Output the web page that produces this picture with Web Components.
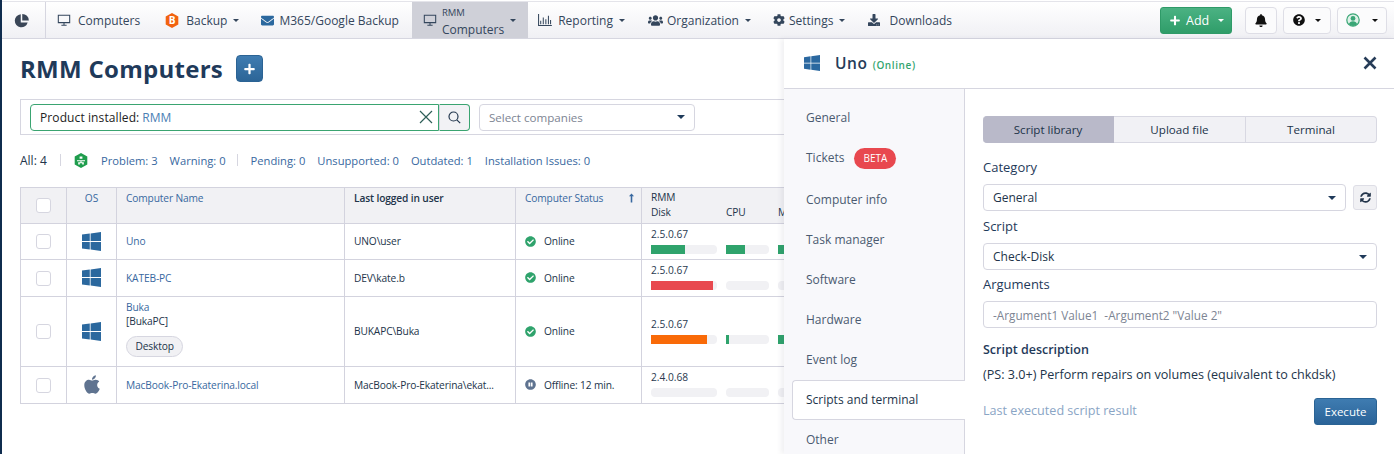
<!DOCTYPE html>
<html lang="en">
<head>
<meta charset="utf-8">
<title>RMM Computers</title>
<style>
  html, body { margin: 0; padding: 0; height: 100%; overflow: hidden; background: #fff; }
  body { font-family: "Open Sans", sans-serif; color: #1e3248; }
</style>
</head>
<body>
<rmm-app>
  <top-nav slot="nav"></top-nav>
  <rmm-page slot="page"></rmm-page>
  <device-drawer slot="drawer"></device-drawer>
</rmm-app>

<script>
const ICONS = {
  windows: ["0 32 448 448", "M0 93.7l183.6-25.3v177.4H0V93.7zm0 324.6l183.6 25.3V268.4H0v149.9zm202.8 28L448 480V268.4H202.8v177.9zm0-380.6v180.1H448V32L202.8 65.7z"],
  apple: ["0 0 384 512", "M318.7 268.7c-.2-36.7 16.4-64.4 50-84.8-18.8-26.9-47.2-41.7-84.7-44.6-35.5-2.8-74.3 20.7-88.5 20.7-15 0-49.4-19.7-76.4-19.7C63.3 141.2 4 184.8 4 273.5q0 39.3 14.4 81.2c12.8 36.7 59 126.7 107.2 125.2 25.2-.6 43-17.9 75.8-17.9 31.8 0 48.3 17.9 76.4 17.9 48.6-.7 90.4-82.5 102.6-119.3-65.2-30.7-61.7-90-61.7-91.9zm-56.6-164.2c27.3-32.4 24.8-61.9 24-72.5-24.1 1.4-52 16.4-67.9 34.9-17.5 19.8-27.8 44.3-25.6 71.9 26.1 2 49.9-11.4 69.5-34.3z"],
  bell: ["0 0 448 512", "M224 512c35.32 0 63.97-28.65 63.97-64H160.03c0 35.35 28.65 64 63.97 64zm215.39-149.71c-19.32-20.76-55.47-51.99-55.47-154.29 0-77.7-54.48-139.9-127.94-155.16V32c0-17.67-14.32-32-31.98-32s-31.98 14.33-31.98 32v20.84C118.56 68.1 64.08 130.3 64.08 208c0 102.3-36.15 133.53-55.47 154.29-6 6.45-8.66 14.16-8.61 21.71.11 16.4 12.98 32 32.1 32h383.8c19.12 0 32-15.6 32.1-32 .05-7.55-2.61-15.27-8.61-21.71z"],
  question: ["0 0 512 512", "M504 256c0 136.997-111.043 248-248 248S8 392.997 8 256C8 119.083 119.043 8 256 8s248 111.083 248 248zM262.655 90c-54.497 0-89.255 22.957-116.549 63.758-3.536 5.286-2.353 12.415 2.715 16.258l34.699 26.31c5.205 3.947 12.621 3.008 16.665-2.122 17.864-22.658 30.113-35.797 57.303-35.797 20.429 0 45.698 13.148 45.698 32.958 0 14.976-12.363 22.667-32.534 33.976C247.128 238.528 216 254.941 216 296v4c0 6.627 5.373 12 12 12h56c6.627 0 12-5.373 12-12v-1.333c0-28.462 83.186-29.647 83.186-106.667 0-58.002-60.165-102-116.531-102zM256 338c-25.365 0-46 20.635-46 46 0 25.364 20.635 46 46 46s46-20.636 46-46c0-25.365-20.635-46-46-46z"],
  check: ["0 0 512 512", "M504 256c0 136.967-111.033 248-248 248S8 392.967 8 256 119.033 8 256 8s248 111.033 248 248zM227.314 387.314l184-184c6.248-6.248 6.248-16.379 0-22.627l-22.627-22.627c-6.248-6.249-16.379-6.249-22.628 0L216 308.118l-70.059-70.059c-6.248-6.248-16.379-6.248-22.628 0l-22.627 22.627c-6.248 6.248-6.248 16.379 0 22.627l104 104c6.249 6.249 16.379 6.249 22.628.001z"],
  pause: ["0 0 512 512", "M256 8C119 8 8 119 8 256s111 248 248 248 248-111 248-248S393 8 256 8zm-16 328c0 8.8-7.2 16-16 16h-48c-8.8 0-16-7.2-16-16V176c0-8.8 7.2-16 16-16h48c8.8 0 16 7.2 16 16v160zm112 0c0 8.8-7.2 16-16 16h-48c-8.8 0-16-7.2-16-16V176c0-8.8 7.2-16 16-16h48c8.8 0 16 7.2 16 16v160z"],
  search: ["0 0 13 13", "M5.5 1a4.5 4.5 0 1 0 0 9a4.5 4.5 0 1 0 0-9zM8.8 8.8l3.4 3.4", true],
  cog: ["0 0 512 512", "M487.4 315.7l-42.6-24.6c4.3-23.2 4.3-47 0-70.2l42.6-24.6c4.9-2.8 7.1-8.6 5.5-14-11.1-35.6-30-67.8-54.7-94.6-3.8-4.1-10-5.1-14.8-2.3L380.8 110c-17.9-15.4-38.5-27.3-60.8-35.1V25.8c0-5.6-3.9-10.5-9.4-11.7-36.7-8.2-74.3-7.8-109.2 0-5.5 1.2-9.4 6.1-9.4 11.7V75c-22.2 7.9-42.8 19.8-60.8 35.1L88.7 85.5c-4.9-2.8-11-1.9-14.8 2.3-24.7 26.7-43.6 58.9-54.7 94.6-1.7 5.4.6 11.2 5.5 14L67.3 221c-4.3 23.2-4.3 47 0 70.2l-42.6 24.6c-4.9 2.8-7.1 8.6-5.5 14 11.1 35.6 30 67.8 54.7 94.6 3.8 4.1 10 5.1 14.8 2.3l42.6-24.6c17.9 15.4 38.5 27.3 60.8 35.1v49.2c0 5.6 3.9 10.5 9.4 11.7 36.7 8.2 74.3 7.8 109.2 0 5.5-1.2 9.4-6.1 9.4-11.7v-49.2c22.2-7.9 42.8-19.8 60.8-35.1l42.6 24.6c4.9 2.8 11 1.9 14.8-2.3 24.7-26.7 43.6-58.9 54.7-94.6 1.5-5.5-.7-11.3-5.6-14.1zM256 336c-44.1 0-80-35.9-80-80s35.9-80 80-80 80 35.9 80 80-35.9 80-80 80z"],
  users: ["0 0 640 512", "M96 224c35.3 0 64-28.7 64-64s-28.7-64-64-64-64 28.7-64 64 28.7 64 64 64zm448 0c35.3 0 64-28.7 64-64s-28.7-64-64-64-64 28.7-64 64 28.7 64 64 64zm32 32h-64c-17.6 0-33.5 7.1-45.1 18.6 40.3 22.1 68.9 62 75.1 109.4h66c17.7 0 32-14.3 32-32v-32c0-35.3-28.7-64-64-64zm-256 0c61.9 0 112-50.1 112-112S381.9 32 320 32 208 82.1 208 144s50.1 112 112 112zm76.8 32h-8.3c-20.8 10-43.9 16-68.5 16s-47.6-6-68.5-16h-8.3C179.6 288 128 339.6 128 403.2V432c0 26.5 21.5 48 48 48h288c26.5 0 48-21.5 48-48v-28.8c0-63.6-51.6-115.2-115.2-115.2zm-223.7-13.4C161.5 263.1 145.6 256 128 256H64c-35.3 0-64 28.7-64 64v32c0 17.7 14.3 32 32 32h65.9c6.3-47.4 34.9-87.3 75.2-109.4z"],
  download: ["0 0 512 512", "M216 0h80c13.3 0 24 10.7 24 24v168h87.7c17.8 0 26.7 21.5 14.1 34.1L269.7 378.3c-7.5 7.5-19.8 7.5-27.3 0L90.1 226.1c-12.6-12.6-3.7-34.1 14.1-34.1H192V24c0-13.3 10.7-24 24-24zm296 376v112c0 13.3-10.7 24-24 24H24c-13.3 0-24-10.7-24-24V376c0-13.3 10.7-24 24-24h146.7l49 49c20.1 20.1 52.5 20.1 72.6 0l49-49H488c13.3 0 24 10.7 24 24zm-124 88c0-11-9-20-20-20s-20 9-20 20 9 20 20 20 20-9 20-20zm64 0c0-11-9-20-20-20s-20 9-20 20 9 20 20 20 20-9 20-20z"],
  envelope: ["0 0 512 512", "M502.3 190.8c3.9-3.1 9.7-.2 9.7 4.7V400c0 26.5-21.5 48-48 48H48c-26.5 0-48-21.5-48-48V195.6c0-5 5.7-7.8 9.7-4.7 22.4 17.4 52.1 39.5 154.1 113.6 21.1 15.4 56.7 47.8 92.2 47.6 35.7.3 72-32.8 92.3-47.6 102-74.1 131.6-96.3 154-113.7zM256 320c23.2.4 56.6-29.2 73.4-41.4 132.7-96.3 142.8-104.7 173.4-128.7 5.8-4.5 9.2-11.5 9.2-18.9v-19c0-26.5-21.5-48-48-48H48C21.5 64 0 85.5 0 112v19c0 7.4 3.4 14.3 9.2 18.9 30.6 23.9 40.7 32.4 173.4 128.7 16.8 12.2 50.2 41.8 73.4 41.4z"],
  sync: ["0 0 512 512", "M370.72 133.28C339.458 104.008 298.888 87.962 255.848 88c-77.458.068-144.328 53.178-162.791 126.85-1.344 5.363-6.122 9.15-11.651 9.15H24.103c-7.498 0-13.194-6.807-11.807-14.176C33.933 94.924 134.813 8 256 8c66.448 0 126.791 26.136 171.315 68.685L463.03 40.97C478.149 25.851 504 36.559 504 57.941V192c0 13.255-10.745 24-24 24H345.941c-21.382 0-32.09-25.851-16.971-40.971l41.75-41.749zM32 296h134.059c21.382 0 32.09 25.851 16.971 40.971l-41.75 41.75c31.262 29.273 71.835 45.319 114.876 45.28 77.418-.07 144.315-53.144 162.787-126.849 1.344-5.363 6.122-9.15 11.651-9.15h57.304c7.498 0 13.194 6.807 11.807 14.176C478.067 417.076 377.187 504 256 504c-66.448 0-126.791-26.136-171.315-68.685L48.97 471.03C33.851 486.149 8 475.441 8 454.059V320c0-13.255 10.745-24 24-24z"],
  plus: ["0 0 448 512", "M416 208H272V64c0-17.67-14.33-32-32-32h-32c-17.67 0-32 14.33-32 32v144H32c-17.67 0-32 14.33-32 32v32c0 17.67 14.33 32 32 32h144v144c0 17.67 14.33 32 32 32h32c17.67 0 32-14.33 32-32V304h144c17.67 0 32-14.33 32-32v-32c0-17.67-14.33-32-32-32z"],
  arrowup: ["0 0 320 512", "M160 20L290 170H200V492H120V170H30Z"],
  monitor: ["0 0 16 16", "M1.5 2.5h13v8.5h-13zM5 14h6M8 11v3", true],
  chart: ["0 0 16 14", "M.5 0v13.5H16M3 8v4M6 4v8M9 6v6M12 2v10M14.5 7v5", true]
};

class ShadowElement extends HTMLElement {
  static get styles() { return ""; }
  markup() { return "<slot></slot>"; }
  connectedCallback() {
    if (this.shadowRoot) return;
    this.attachShadow({ mode: "open" });
    this.shadowRoot.innerHTML = `<style>${this.constructor.styles}</style>${this.markup()}`;
  }
}

class AppIcon extends ShadowElement {
  static get styles() {
    return `:host { display: inline-flex; line-height: 0; flex: none; } svg { display: block; }`;
  }
  markup() {
    const [box, d, outline] = ICONS[this.getAttribute("name")];
    const w = this.getAttribute("w") || 14;
    const h = this.getAttribute("h") || 14;
    const paint = outline
      ? `fill="none" stroke="currentColor" stroke-width="1.2"`
      : `fill="currentColor"`;
    return `<svg width="${w}" height="${h}" viewBox="${box}"><path ${paint} d="${d}"/></svg>`;
  }
}

class NavCaret extends ShadowElement {
  static get styles() {
    return `:host { display: inline-block; width: 0; height: 0; flex: none;
      border-left: 3px solid transparent; border-right: 3px solid transparent; border-top: 3px solid currentColor; }`;
  }
  markup() { return ""; }
}

class RmmApp extends ShadowElement {
  static get styles() {
    return `
      :host { display: flex; flex-direction: column; height: 454px; box-sizing: border-box;
        border-left: 2px solid #0f2c4e; position: relative; overflow: hidden; }
      .body { position: relative; flex: 1; min-height: 0; }
    `;
  }
  markup() {
    return `<slot name="nav"></slot><div class="body"><slot name="page"></slot><slot name="drawer"></slot></div>`;
  }
}

class NavItem extends ShadowElement {
  static get styles() {
    return `
      :host { display: flex; align-items: center; height: 100%; padding: 0 11px; color: #34465c;
        font-size: 12px; white-space: nowrap; box-sizing: border-box; }
      :host([active]) { background: #cfd0d8; padding-right: 12px; }
      .label { margin-left: var(--gap, 7px); }
      :host([active]) .label { margin-top: 5px; }
      .cap { font-size: 9.5px; display: block; line-height: 12px; }
      .main { display: block; line-height: 17px; margin-top: 2px; }
      nav-caret { margin-left: 6px; }
    `;
  }
  markup() {
    const caret = this.hasAttribute("caret") ? "<nav-caret></nav-caret>" : "";
    const cap = this.getAttribute("cap");
    const text = cap
      ? `<span class="cap">${cap}</span><span class="main"><slot></slot></span>`
      : `<slot></slot>`;
    return `<slot name="icon"></slot><span class="label">${text}</span>${caret}`;
  }
}

class TopNav extends ShadowElement {
  static get styles() {
    return `
      :host { display: flex; align-items: stretch; height: 36px; box-sizing: content-box; flex: none;
        margin-top: 1px; border-top: 1px solid #e4e4ea; border-bottom: 1px solid #d6d6e0;
        background: linear-gradient(#fff, #f0f0f4); font-size: 12px; position: relative; }
      .logo { width: 44px; box-sizing: border-box; border-right: 1px solid #d6d6e0; display: flex;
        align-items: center; justify-content: center; padding-right: 4px; }
      .items { display: flex; align-items: stretch; }
      .right { margin-left: auto; display: flex; align-items: center; padding-right: 7px; }
      .add { width: 72px; height: 27px; box-sizing: border-box; border: 1px solid #2f9a68; border-radius: 3px;
        background: linear-gradient(#4bb283, #2f9d69); color: #fff; display: flex; align-items: center;
        font-size: 12.5px; padding-left: 9px; margin-right: 13px; }
      .add span { margin: 0 9px 0 6px; }
      .tool { height: 27px; box-sizing: border-box; border: 1px solid #dedee6; border-radius: 4px; background: #fbfbfc;
        display: flex; align-items: center; justify-content: center; color: #111; margin-right: 6px; }
      .bell { width: 32px; }
      .help { width: 48px; gap: 10px; }
      .user { width: 50px; gap: 12px; margin-right: 0; }
    `;
  }
  markup() {
    return `
      <div class="logo">
        <svg width="15" height="15" viewBox="0 0 16 16">
          <path fill="#3a4657" d="M7.2 1.2A7 7 0 1 0 14.6 10H7.2z"/>
          <path fill="#3a4657" d="M9 0a7 7 0 0 1 7 7H9z" transform="translate(-.2 1)"/>
        </svg>
      </div>
      <div class="items">
        <nav-item style="margin-right:3px"><app-icon slot="icon" name="monitor" w="14" h="14"></app-icon>Computers</nav-item>
        <nav-item caret>
          <svg slot="icon" width="14" height="15" viewBox="0 0 14 15">
            <path fill="#f2620f" d="M7 0l6.3 3.6v7.8L7 15 .7 11.4V3.6z"/>
            <text x="7" y="11" text-anchor="middle" fill="#fff" font-family="Open Sans" font-weight="700" font-size="10">B</text>
          </svg>
          Backup
        </nav-item>
        <nav-item style="margin-right:2px;--gap:5px"><app-icon slot="icon" name="envelope" w="13" h="13" style="color:#2b689e"></app-icon>M365/Google Backup</nav-item>
        <nav-item active caret cap="RMM" style="--gap:5px"><app-icon slot="icon" name="monitor" w="14" h="14"></app-icon>Computers</nav-item>
        <nav-item caret style="margin-left:-1px;--gap:6px"><app-icon slot="icon" name="chart" w="14" h="12"></app-icon>Reporting</nav-item>
        <nav-item caret style="margin-left:1px;--gap:4px"><app-icon slot="icon" name="users" w="15" h="13"></app-icon>Organization</nav-item>
        <nav-item caret style="--gap:4px"><app-icon slot="icon" name="cog" w="12" h="12"></app-icon>Settings</nav-item>
        <nav-item style="margin-left:1px;--gap:9px"><app-icon slot="icon" name="download" w="12" h="12"></app-icon>Downloads</nav-item>
      </div>
      <div class="right">
        <div class="add"><app-icon name="plus" w="10" h="11"></app-icon><span>Add</span><nav-caret></nav-caret></div>
        <div class="tool bell"><app-icon name="bell" w="12" h="13"></app-icon></div>
        <div class="tool help"><app-icon name="question" w="12" h="12"></app-icon><nav-caret></nav-caret></div>
        <div class="tool user">
          <svg width="14" height="14" viewBox="0 0 14 14">
            <circle cx="7" cy="7" r="6.2" fill="#dff1e8" stroke="#3aa676" stroke-width="1.2"/>
            <circle cx="7" cy="5.4" r="2.4" fill="#3aa676"/>
            <path fill="#3aa676" d="M2.8 11.2c.6-2 2.2-3 4.2-3s3.6 1 4.2 3A6 6 0 0 1 7 13a6 6 0 0 1-4.2-1.8z"/>
          </svg>
          <nav-caret></nav-caret>
        </div>
      </div>
    `;
  }
}

class RmmPage extends ShadowElement {
  static get styles() {
    return `
      :host { display: block; padding: 16px 0 0 18px; }
      .title { display: flex; align-items: center; height: 27px; gap: 13px; }
      h1 { margin: 0; font-size: 24px; font-weight: 700; color: #1f3a5a; letter-spacing: .28px; line-height: 27px; }
      .add { width: 27px; height: 27px; border-radius: 4px; background: linear-gradient(#3f7cb1, #2c6597);
        display: flex; align-items: center; justify-content: center; color: #fff; box-sizing: border-box; border: 1px solid #2b6394; }
    `;
  }
  markup() {
    return `
      <div class="title">
        <h1>RMM Computers</h1>
        <div class="add"><app-icon name="plus" w="11" h="12"></app-icon></div>
      </div>
      <filter-bar></filter-bar>
      <stat-row></stat-row>
      <computer-table></computer-table>
    `;
  }
}

class FilterBar extends ShadowElement {
  static get styles() {
    return `
      :host { display: flex; align-items: center; margin-top: 17px; height: 36px; box-sizing: border-box;
        border: 1px solid #d6d6e0; border-right: 0; padding-left: 9px; font-size: 12px; color: #222; }
      .input { width: 409px; height: 27px; box-sizing: border-box; border: 1px solid #3aa471; border-radius: 4px 0 0 4px;
        display: flex; align-items: center; padding-left: 9px; background: #fff; }
      .input b { font-weight: 500; letter-spacing: .1px; }
      .input span { color: #4a80b4; margin-left: 3px; }
      .input svg { margin-left: auto; margin-right: 5px; }
      .search { width: 31px; height: 27px; box-sizing: border-box; border: 1px solid #3aa471; border-left-color: #d6d6e0; border-radius: 0 4px 4px 0;
        background: #f2f2f5; display: flex; align-items: center; justify-content: center; color: #24384f; }
      .select { width: 216px; height: 27px; margin-left: 9px; box-sizing: border-box; border: 1px solid #d6d6e0; border-radius: 4px;
        display: flex; align-items: center; padding: 0 9px; color: #7d8593; justify-content: space-between; font-size: 11.6px; }
      nav-caret { color: #1f3a5a; }
    `;
  }
  markup() {
    return `
      <div class="input"><b>Product installed:</b><span>RMM</span>
        <svg width="14" height="14" viewBox="0 0 14 14"><path d="M1 1l12 12M13 1L1 13" stroke="#2e5f58" stroke-width="1.2" fill="none"/></svg>
      </div>
      <div class="search"><app-icon name="search" w="13" h="13"></app-icon></div>
      <div class="select">Select companies<nav-caret style="border-left-width:4px;border-right-width:4px;border-top-width:4px"></nav-caret></div>
    `;
  }
}

class StatRow extends ShadowElement {
  static get styles() {
    return `
      :host { display: flex; align-items: center; height: 18px; margin-top: 16px; font-size: 11.2px; color: #3868a0; white-space: nowrap; }
      .all { color: #22344a; width: 27px; font-size: 12px; }
      .sep { width: 1px; height: 12px; background: #d6d6e0; }
      svg { display: block; }
      a { margin-right: 12px; }
    `;
  }
  markup() {
    return `
      <span class="all">All: 4</span>
      <span class="sep" style="margin:0 13px"></span>
      <svg width="14" height="15" viewBox="0 0 14 15" style="margin-right:13px">
        <path fill="#1f9d4d" d="M7 0l6.3 3.6v7.8L7 15 .7 11.4V3.6z"/>
        <path fill="#fff" d="M5.6 3.4h2.8v2.4H5.6zM3 7.2h8v1H7.5v1.1H9.8V11.6H8.2V10.2H5.8V11.6H4.2V9.3H6.5V8.2H3z"/>
      </svg>
      <a>Problem: 3</a><a>Warning: 0</a>
      <span class="sep" style="margin:0 13px 0 -1px"></span>
      <a>Pending: 0</a><a>Unsupported: 0</a><a>Outdated: 1</a><a>Installation Issues: 0</a>
    `;
  }
}

class ComputerTable extends ShadowElement {
  static get styles() {
    return `
      :host { display: block; margin-top: 18px; font-size: 10.2px; letter-spacing: -.13px; color: #22344a;
        --cols: 45px 50px 228px 171px 126px 1fr; }
      .head { display: grid; grid-template-columns: var(--cols); height: 37px; box-sizing: border-box;
        background: #f1f1f4; border: 1px solid #d3d3de; border-right: 0; }
      .head > div { border-left: 1px solid #d3d3de; padding: 3px 9px; box-sizing: border-box; white-space: nowrap; position: relative; line-height: 14px; }
      .head > div:first-child { border-left: 0; padding: 0; }
      .link { color: #3868a0; }
      .center { text-align: center; padding: 3px 0 !important; }
      .rmm { padding: 2px 9px !important; line-height: 15px !important; }
      .rmm div { display: flex; }
      .rmm div span:nth-child(1) { width: 75px; }
      .rmm div span:nth-child(2) { width: 52px; }
      .sort { position: absolute; right: 6px; top: 5px; color: #3868a0; }
      row-check { margin: 10px 0 0 15px; }
    `;
  }
  markup() {
    return `
      <div class="head">
        <div><row-check></row-check></div>
        <div class="link center">OS</div>
        <div class="link">Computer Name</div>
        <div style="font-weight:600">Last logged in user</div>
        <div class="link">Computer Status<app-icon class="sort" name="arrowup" w="7" h="10"></app-icon></div>
        <div class="rmm">RMM<div><span>Disk</span><span>CPU</span><span>Memory</span></div></div>
      </div>
      <computer-row os="windows" height="36" user="UNO\\user" status="online" label="Online" version="2.5.0.67" bars="52:#2fa36c,44:#2fa36c,30:#2fa36c"><span class="name">Uno</span></computer-row>
      <computer-row os="windows" height="37" user="DEV\\kate.b" status="online" label="Online" version="2.5.0.67" bars="94:#e8494f,0:#fff,0:#fff"><span class="name">KATEB-PC</span></computer-row>
      <computer-row os="windows" height="70" lift user="BUKAPC\\Buka" status="online" label="Online" version="2.5.0.67" bars="85:#f96a08,7:#2fa36c,14:#2fa36c">
        <span class="name">Buka</span><span class="alias">[BukaPC]</span><tag-pill>Desktop</tag-pill>
      </computer-row>
      <computer-row os="apple" height="37" user="MacBook-Pro-Ekaterina\\ekat..." status="offline" label="Offline: 12 min." version="2.4.0.68" bars="0:#fff,0:#fff,0:#fff"><span class="name">MacBook-Pro-Ekaterina.local</span></computer-row>
    `;
  }
}

class RowCheck extends ShadowElement {
  static get styles() {
    return `:host { display: block; width: 15px; height: 15px; box-sizing: border-box; background: #fff;
      border: 1px solid #d6d6e0; border-radius: 3px; }`;
  }
  markup() { return ""; }
}

class TagPill extends ShadowElement {
  static get styles() {
    return `:host { display: inline-block; margin-top: 8px; padding: 0 8.5px; height: 21px; line-height: 19px; box-sizing: border-box;
      border: 1px solid #d6d6e0; border-radius: 11px; background: #f1f1f4; color: #22344a; font-size: 10.2px; }`;
  }
}

class ComputerRow extends ShadowElement {
  static get styles() {
    return `
      :host { display: grid; grid-template-columns: var(--cols); box-sizing: border-box;
        border: 1px solid #d3d3de; border-top: 0; border-right: 0; font-size: 10.2px; white-space: nowrap; }
      .cell { border-left: 1px solid #d3d3de; display: flex; align-items: center; padding: 0 9px 1px; box-sizing: border-box; min-width: 0; }
      .cell.chk { border-left: 0; padding: 0 0 0 15px; }
      .os { justify-content: center; padding: 0 0 1px; color: #2b689e; }
      .os.apple { color: #5f7390; }
      .name { flex-direction: column; align-items: flex-start; justify-content: center; line-height: 14px; }
      :host([lift]) .name { padding-bottom: 7px; }
      ::slotted(.name) { color: #3868a0; display: block; }
      ::slotted(.alias) { color: #22344a; display: block; }
      .status { gap: 8px; }
      .status app-icon { color: #2fa36c; }
      .status.offline app-icon { color: #5f7390; }
      .rmm { flex-direction: column; align-items: flex-start; justify-content: center; padding-bottom: 0; }
      .ver { line-height: 9px; margin-bottom: 6px; color: #2a3a50; letter-spacing: 0; }
      .bars { display: flex; gap: 9px; }
    `;
  }
  markup() {
    const os = this.getAttribute("os");
    const offline = this.getAttribute("status") === "offline";
    const bars = this.getAttribute("bars").split(",").map((pair, i) => {
      const [fill, color] = pair.split(":");
      return `<usage-bar fill="${fill}" color="${color}" style="width:${i === 0 ? 66 : 43}px"></usage-bar>`;
    }).join("");
    this.style.height = this.getAttribute("height") + "px";
    return `
      <div class="cell chk"><row-check></row-check></div>
      <div class="cell os ${os}"><app-icon name="${os}" w="${os === "apple" ? 16 : 19}" h="${os === "apple" ? 21 : 19}"></app-icon></div>
      <div class="cell name"><slot></slot></div>
      <div class="cell">${this.getAttribute("user")}</div>
      <div class="cell status ${offline ? "offline" : ""}">
        <app-icon name="${offline ? "pause" : "check"}" w="11" h="11"></app-icon>${this.getAttribute("label")}
      </div>
      <div class="cell rmm"><div class="ver">${this.getAttribute("version")}</div><div class="bars">${bars}</div></div>
    `;
  }
}

class UsageBar extends ShadowElement {
  static get styles() {
    return `
      :host { display: block; height: 9px; background: #f1f1f4; border-radius: 4px; flex: none; }
      div { height: 100%; }
    `;
  }
  markup() {
    return `<div style="width:${this.getAttribute("fill")}%;background:${this.getAttribute("color")}"></div>`;
  }
}

class DeviceDrawer extends ShadowElement {
  static get styles() {
    return `
      :host { position: absolute; top: 0; right: 0; bottom: 0; width: 610px; background: #fff;
        box-shadow: -3px 0 5px rgba(60, 60, 90, .08); display: flex; flex-direction: column; }
      header { height: 50px; flex: none; box-sizing: border-box; border-bottom: 1px solid #d6d6e0; display: flex; align-items: center;
        padding: 0 17px 1px 20px; color: #2b68a0; }
      h2 { margin: 0 0 0 15px; font-size: 15.5px; font-weight: 600; color: #263c58; letter-spacing: .6px; }
      .state { font-size: 10px; font-weight: 600; color: #33a56f; margin: 3px 0 0 5px; letter-spacing: .6px; }
      .close { margin-left: auto; }
      .body { display: flex; flex: 1; min-height: 0; }
    `;
  }
  markup() {
    return `
      <header>
        <app-icon name="windows" w="16" h="16"></app-icon>
        <h2>Uno</h2><span class="state">(Online)</span>
        <svg class="close" width="14" height="14" viewBox="0 0 14 14"><path d="M1.5 1.5l11 11M12.5 1.5l-11 11" stroke="#263c58" stroke-width="2.6" fill="none"/></svg>
      </header>
      <div class="body">
        <side-menu></side-menu>
        <script-panel></script-panel>
      </div>
    `;
  }
}

class SideMenu extends ShadowElement {
  static get styles() {
    return `
      :host { display: block; width: 181px; flex: none; box-sizing: border-box; background: #f8f8fb; padding: 9px 0 0 8px; position: relative;
        font-size: 12px; color: #4a5a70; }
      :host::after { content: ""; position: absolute; top: 0; bottom: 0; right: 0; width: 1px; background: #d6d6e0; }
      .item { height: 40px; line-height: 40px; padding-left: 14px; box-sizing: border-box; display: flex; align-items: center; }
      .tickets { height: 42px; padding-bottom: 2px; }
      .active { background: #fff; color: #22344a; font-weight: 500; height: 40px; border: 1px solid #d6d6e0; border-right: 0;
        border-radius: 4px 0 0 4px; position: relative; z-index: 1; padding-left: 13px; }
      .beta { display: inline-block; margin-left: 10px; width: 42px; height: 21px; line-height: 21px; text-align: center; border-radius: 11px;
        background: #e8484f; color: #fff; font-size: 10px; font-weight: 500; }
    `;
  }
  markup() {
    return `
      <div class="item">General</div>
      <div class="item tickets">Tickets<span class="beta">BETA</span></div>
      <div class="item">Computer info</div>
      <div class="item">Task manager</div>
      <div class="item">Software</div>
      <div class="item">Hardware</div>
      <div class="item">Event log</div>
      <div class="item active">Scripts and terminal</div>
      <div class="item">Other</div>
    `;
  }
}

class ScriptPanel extends ShadowElement {
  static get styles() {
    return `
      :host { display: block; flex: 1; padding: 27px 17px 0 18px; font-size: 12px; color: #22344a; min-width: 0; }
      .tabs { display: grid; grid-template-columns: 131px 132px 131px; height: 27px; font-size: 11.6px; }
      .tabs div { display: flex; align-items: center; justify-content: center; background: #f1f1f5; border: 1px solid #d8d8e2; border-left: 0; box-sizing: border-box; }
      .tabs div:first-child { background: #b9b9c9; border-color: #b9b9c9; border-radius: 4px 0 0 4px; }
      .tabs div:last-child { border-radius: 0 4px 4px 0; }
      label { display: block; font-size: 13px; color: #1f3a5a; line-height: 18px; }
      .row { display: flex; gap: 7px; align-items: center; }
      .refresh { width: 24px; height: 25px; flex: none; box-sizing: border-box; border: 1px solid #dedee6; border-radius: 3px; background: #f1f1f4;
        display: flex; align-items: center; justify-content: center; color: #22344a; }
      .field { flex: 1; height: 27px; box-sizing: border-box; border: 1px solid #d6d6e0; border-radius: 4px; display: flex; align-items: center;
        justify-content: space-between; padding: 0 9px; color: #22344a; background: #fff; }
      .field nav-caret { color: #1f3a5a; }
      .ph { color: #7d8593; font-size: 11.75px; }
      h3 { margin: 13px 0 0; font-size: 12.5px; font-weight: 600; color: #1f3a5a; line-height: 18px; }
      p { margin: 7px 0 0; line-height: 18px; color: #22344a; font-size: 12.6px; }
      .foot { display: flex; align-items: center; justify-content: space-between; margin-top: 14px; color: #8aa5c5; font-size: 12.6px; }
      .foot span { padding-bottom: 2px; }
      .exec { width: 63px; height: 27px; box-sizing: border-box; border: 1px solid #2a6394; border-radius: 3px; background: linear-gradient(#3f7cb1, #2a6398);
        color: #fff; display: flex; align-items: center; justify-content: center; font-size: 11.5px; }
    `;
  }
  markup() {
    const caret = `<nav-caret style="border-left-width:4px;border-right-width:4px;border-top-width:4px"></nav-caret>`;
    return `
      <div class="tabs"><div>Script library</div><div>Upload file</div><div>Terminal</div></div>
      <label style="margin-top:15px;margin-bottom:8px">Category</label>
      <div class="row">
        <div class="field">General${caret}</div>
        <div class="refresh"><app-icon name="sync" w="11" h="11"></app-icon></div>
      </div>
      <label style="margin-top:6px;margin-bottom:8px">Script</label>
      <div class="field">Check-Disk${caret}</div>
      <label style="margin-top:5px;margin-bottom:8px">Arguments</label>
      <div class="field ph">-Argument1 Value1&nbsp; -Argument2 "Value 2"</div>
      <h3>Script description</h3>
      <p>(PS: 3.0+) Perform repairs on volumes (equivalent to chkdsk)</p>
      <div class="foot"><span>Last executed script result</span><div class="exec">Execute</div></div>
    `;
  }
}

customElements.define("app-icon", AppIcon);
customElements.define("nav-caret", NavCaret);
customElements.define("nav-item", NavItem);
customElements.define("top-nav", TopNav);
customElements.define("row-check", RowCheck);
customElements.define("tag-pill", TagPill);
customElements.define("usage-bar", UsageBar);
customElements.define("computer-row", ComputerRow);
customElements.define("computer-table", ComputerTable);
customElements.define("filter-bar", FilterBar);
customElements.define("stat-row", StatRow);
customElements.define("rmm-page", RmmPage);
customElements.define("side-menu", SideMenu);
customElements.define("script-panel", ScriptPanel);
customElements.define("device-drawer", DeviceDrawer);
customElements.define("rmm-app", RmmApp);
</script>
</body>
</html>
